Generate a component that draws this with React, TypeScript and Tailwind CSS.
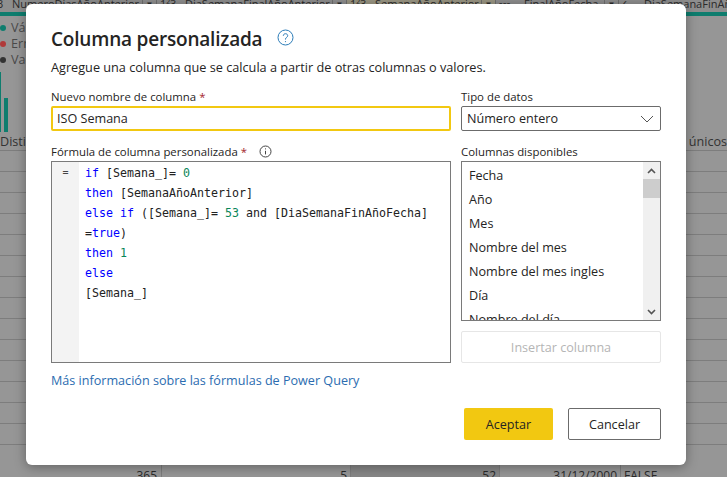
import React from "react";

const sans = "font-['Open_Sans','Noto_Sans',sans-serif]";

const headers = [
  { w: "w-[157px]", icon: "1²3", name: "NumeroDiasAñoAnterior", c: "", ml: "-ml-[13px]" },
  { w: "w-[190px]", icon: "1²3", name: "DiaSemanaFinalAñoAnterior", c: "", ml: "ml-[3px]" },
  { w: "w-[149px]", icon: "1²3", name: "SemanaAñoAnterior", c: "bg-[#9a9683]", ml: "ml-[3px]" },
  { w: "w-[123px]", icon: "▪▪▪", name: "FinalAñoFecha", c: "", ml: "ml-[3px]" },
  { w: "flex-1", icon: "✓", name: "DiaSemanaFinAñoFecha", c: "", ml: "ml-0" },
];

const K = ({ children }: { children: React.ReactNode }) => <span className="text-[#0000ff]">{children}</span>;
const N = ({ children }: { children: React.ReactNode }) => <span className="text-[#098658]">{children}</span>;

const columns = ["Fecha", "Año", "Mes", "Nombre del mes", "Nombre del mes ingles", "Día", "Nombre del día"];

function Background() {
  return (
    <div className={`h-[477px] overflow-hidden bg-[#969696] text-[#2a2a2a] ${sans}`}>
      <div className="flex h-3 overflow-hidden bg-[#8e8e8e]">
        {headers.map((h, i) => (
          <div key={h.name} className={`${h.w} ${h.c} -mt-[5px] flex h-[18px] items-center overflow-hidden text-[11px] whitespace-nowrap`}>
            <span className={`${h.ml} flex min-w-0 flex-1 items-center overflow-hidden`}>
              <span className="w-[25px] shrink-0">{h.icon}</span>
              <span>{h.name}</span>
            </span>
            {i < 4 && (
              <span className="flex h-full w-[15px] shrink-0 items-center justify-center border-x border-[#6f6f6f] text-[8px]">▼</span>
            )}
          </div>
        ))}
      </div>
      <div className="h-1 bg-[#0e7d6e]" />
      <div className="flex h-[135px] flex-col">
        <div className="flex h-[57px] flex-col gap-1 pt-[6px] text-[12.6px] leading-[12px] text-[#4a4a4a]">
          <div className="flex items-center gap-[5px]"><span className="h-[6px] w-[6px] rounded-full bg-[#0e7d6e]" />Válido</div>
          <div className="flex items-center gap-[5px]"><span className="h-[6px] w-[6px] rounded-full bg-[#b03a3a]" />Errores</div>
          <div className="flex items-center gap-[5px]"><span className="h-[6px] w-[6px] rounded-full bg-[#333]" />Vacío</div>
        </div>
        <div className="-mt-[1px] flex h-[60px] shrink-0 items-end gap-[3px]">
          <div className="h-[60px] w-[1px] bg-[#0e7d6e]" />
          <div className="h-[34px] w-[4px] bg-[#0e7d6e]" />
        </div>
        <div className="flex h-[19px] items-center justify-between border-b border-[#7d7d7d] pt-[3px] text-[12.6px] text-[#333]">
          <span>Distintos</span>
          <span>; únicos</span>
        </div>
      </div>
      {Array.from({ length: 14 }).map((_, i) => (
        <div key={i} className="h-[21px] border-b border-[#7d7d7d]" />
      ))}
      <div className="flex h-8 text-[12px] leading-[14px] text-[#2a2a2a]">
        <div className="w-[162px] border-r border-[#7d7d7d] pt-[24px] pr-[4px] text-right">365</div>
        <div className="w-[189px] border-r border-[#7d7d7d] pt-[24px] pr-[3px] text-right">5</div>
        <div className="w-[149px] border-r border-[#7d7d7d] bg-[#878787] pt-[24px] pr-[3px] text-right">52</div>
        <div className="w-[121px] border-r border-[#7d7d7d] pt-[24px] pr-[3px] text-right">31/12/2000</div>
        <div className="flex-1 pt-[24px] pl-[3px]">FALSE</div>
      </div>
    </div>
  );
}

function Dialog() {
  return (
    <div className={`absolute left-[26px] top-[4px] flex h-[461px] w-[660px] flex-col rounded-[6px] bg-white px-[25px] text-[#252423] shadow-[0_2px_12px_rgba(0,0,0,0.35)] ${sans}`}>
      <div className="mt-[22px] flex h-[26px] items-center">
        <h1 className="text-[19px] font-semibold leading-[26px] tracking-[-0.2px]">Columna personalizada</h1>
        <svg className="-mt-[3px] ml-[15px]" width="17" height="17" viewBox="0 0 17 17" fill="none" stroke="#2b7cb8" strokeWidth="1">
          <circle cx="8.5" cy="8.5" r="7.5" />
          <path d="M6.3 6.8c0-1.3 1-2.1 2.2-2.1s2.2.8 2.2 2c0 1.7-2.2 1.7-2.2 3.4v.5" />
          <circle cx="8.5" cy="12.6" r="0.6" fill="#2b7cb8" stroke="none" />
        </svg>
      </div>
      <p className="mt-[6px] text-[12.7px] leading-[18px]">Agregue una columna que se calcula a partir de otras columnas o valores.</p>
      <div className="mt-[14px] grid grid-cols-[400px_200px] gap-x-[10px]">
        <div>
          <label className="block h-[16px] text-[11.4px] leading-[14px] font-medium">Nuevo nombre de columna <span className="text-[#a4262c]">*</span></label>
          <div className="flex h-[25px] items-center rounded-[2px] border-2 border-[#f2c811] px-[4px] pt-[1px] text-[12.6px]">ISO Semana</div>
        </div>
        <div>
          <label className="block h-[16px] text-[11.4px] leading-[14px] font-medium">Tipo de datos</label>
          <div className="flex h-[25px] items-center justify-between rounded-[2px] border border-[#6b6b6b] pl-[5px] pr-[6px] text-[12.6px]">
            <span className="pt-[2px]">Número entero</span>
            <svg width="14" height="8" viewBox="0 0 14 8" fill="none" stroke="#555" strokeWidth="1"><path d="M1 1l6 6 6-6" /></svg>
          </div>
        </div>
        <div className="mt-[13px]">
          <div className="flex h-[17px] items-start text-[11.4px] leading-[16px] font-medium">
            <span>Fórmula de columna personalizada <span className="text-[#a4262c]">*</span></span>
            <svg className="ml-[12px] mt-[1px]" width="13" height="13" viewBox="0 0 13 13" fill="none" stroke="#444" strokeWidth="1">
              <circle cx="6.5" cy="6.5" r="5.5" />
              <path d="M6.5 5.8v3.6" />
              <path d="M6.5 3.4v1" />
            </svg>
          </div>
          <div className="flex h-[202px] border border-[#7a7a7a]">
            <div className="w-[27px] bg-[#f3f3f3] pt-[1px] text-center font-['DejaVu_Sans_Mono',monospace] text-[10px] leading-[20px] text-[#444]">=</div>
            <pre className="pl-[6px] pt-[1px] font-['DejaVu_Sans_Mono',monospace] text-[11.63px] leading-[20px] text-[#222]">
              <K>if</K> [Semana_]= <N>0</N>{"\n"}
              <K>then</K> [SemanaAñoAnterior]{"\n"}
              <K>else if</K> ([Semana_]= <N>53</N> and [DiaSemanaFinAñoFecha]{"\n"}
              =<K>true</K>){"\n"}
              <K>then</K> <N>1</N>{"\n"}
              <K>else</K>{"\n"}
              [Semana_]
            </pre>
          </div>
        </div>
        <div className="mt-[13px]">
          <label className="block h-[17px] text-[11.4px] leading-[16px] font-medium">Columnas disponibles</label>
          <div className="flex h-[160px] overflow-hidden border border-[#7a7a7a]">
            <ul className="min-w-0 flex-1 overflow-hidden pl-[7px] pt-[2px] text-[12.6px] leading-[24px]">
              {columns.map((c) => <li key={c} className="whitespace-nowrap">{c}</li>)}
            </ul>
            <div className="flex w-[17px] flex-col bg-[#f0f0f0]">
              <div className="flex h-[17px] items-center justify-center">
                <svg width="9" height="6" viewBox="0 0 9 6" fill="none" stroke="#555" strokeWidth="1.6"><path d="M1 5l3.5-3.5L8 5" /></svg>
              </div>
              <div className="h-[19px] bg-[#cdcdcd]" />
              <div className="flex-1" />
              <div className="flex h-[17px] items-center justify-center">
                <svg width="9" height="6" viewBox="0 0 9 6" fill="none" stroke="#555" strokeWidth="1.6"><path d="M1 1l3.5 3.5L8 1" /></svg>
              </div>
            </div>
          </div>
          <button className="mt-[10px] h-[32px] w-full rounded-[2px] border border-[#e6e6e6] pt-[2px] text-[12.6px] text-[#b5b5b5]">Insertar columna</button>
        </div>
      </div>
      <a className="mt-[9px] text-[12.6px] leading-[18px] text-[#2b6cb0]">Más información sobre las fórmulas de Power Query</a>
      <div className="mt-[18px] flex justify-end gap-[15px]">
        <button className="h-[32px] w-[89px] rounded-[2px] bg-[#f2c811] pt-[3px] text-[12.6px] text-[#252423]">Aceptar</button>
        <button className="h-[32px] w-[93px] rounded-[2px] border border-[#6b6b6b] pt-[2px] text-[12.6px] text-[#252423]">Cancelar</button>
      </div>
    </div>
  );
}

export default function App() {
  return (
    <div className="relative h-[477px] w-[727px] overflow-hidden">
      <Background />
      <Dialog />
    </div>
  );
}
